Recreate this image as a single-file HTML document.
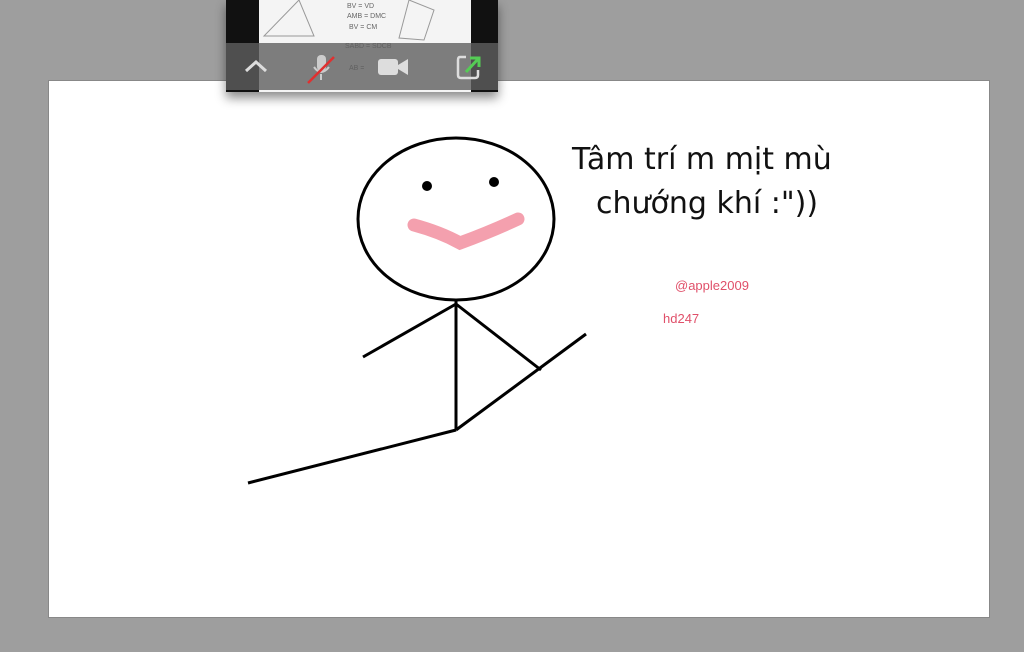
<!DOCTYPE html>
<html><head><meta charset="utf-8"><style>
body{margin:0;width:1024px;height:652px;background:#9e9e9e;position:relative;overflow:hidden;font-family:"Liberation Sans",sans-serif}
.paper{position:absolute;left:48px;top:80px;width:942px;height:538px;background:#fff;border:1px solid #888;box-sizing:border-box}
.pip{position:absolute;left:226px;top:0;width:272px;height:92px;background:#111;box-shadow:0 6px 10px rgba(0,0,0,.45)}
.pip .doc{position:absolute;left:33px;top:0;width:212px;height:92px;background:#f4f4f4}
.pip .bar{position:absolute;left:0;top:43px;width:272px;height:47px;background:rgba(95,95,95,.8)}
.t{position:absolute;color:#111;font-size:30px;font-family:"DejaVu Sans",sans-serif}
</style></head><body>
<div class="paper"></div>
<svg width="1024" height="652" style="position:absolute;left:0;top:0">
<ellipse cx="456" cy="219" rx="98" ry="81" fill="none" stroke="#000" stroke-width="3"/>
<circle cx="427" cy="186" r="5"/><circle cx="494" cy="182" r="5"/>
<path d="M414 225 Q440 232 460 243 Q490 232 518 219" fill="none" stroke="#f4a0ae" stroke-width="13" stroke-linecap="round"/>
<g stroke="#000" stroke-width="3" fill="none">
<path d="M456 300 L456 430"/><path d="M456 304 L363 357"/><path d="M456 304 L541 370"/>
<path d="M456 430 L586 334"/><path d="M456 430 L248 483"/></g>
</svg>
<div class="t" style="left:572px;top:142px">Tâm trí m mịt mù</div>
<div class="t" style="left:596px;top:186px">chướng khí :"))</div>
<div style="position:absolute;left:675px;top:278px;color:#e0506a;font-size:13px">@apple2009</div>
<div style="position:absolute;left:663px;top:311px;color:#e0506a;font-size:13px">hd247</div>
<div class="pip"><div class="doc">
<svg width="212" height="92" style="position:absolute;left:0;top:0">
<g stroke="#999" stroke-width="1" fill="none"><path d="M40 0 L5 36 H55 L40 0"/><path d="M150 0 L175 10 L165 40 L140 38Z"/></g>
<g fill="#666" font-size="7" font-family="Liberation Sans"><text x="88" y="8">BV = VD</text><text x="88" y="18">AMB = DMC</text><text x="90" y="29">BV = CM</text><text x="86" y="48">SABD = SDCB</text><text x="90" y="70">AB =</text></g>
</svg></div><div class="bar">
<svg width="272" height="47">
<path d="M20 28 L30 19 L40 28" stroke="#ddd" stroke-width="3" fill="none"/>
<rect x="91" y="12" width="9" height="16" rx="4" fill="#ccc"/><path d="M88 24 Q95 34 103 24 M95 31 V37" stroke="#ccc" stroke-width="2" fill="none"/>
<path d="M82 40 L108 14" stroke="#e03030" stroke-width="2.5"/>
<rect x="152" y="16" width="20" height="16" rx="3" fill="#ddd"/><path d="M172 22 L182 16 V32 L172 26Z" fill="#ddd"/>
<path d="M240 14 H234 Q232 14 232 17 V32 Q232 35 235 35 H249 Q252 35 252 32 V27" stroke="#ddd" stroke-width="2.5" fill="none"/>
<path d="M240 29 L252 16 M244 15 H253 V24" stroke="#5c5" stroke-width="3" fill="none"/>
</svg></div></div>
</body></html>
